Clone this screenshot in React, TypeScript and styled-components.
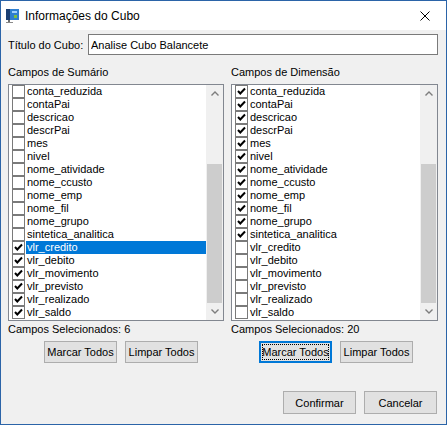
import React from 'react';
import styled, { createGlobalStyle } from 'styled-components';

const GlobalStyle = createGlobalStyle`
  html, body {
    margin: 0;
    padding: 0;
    background: #ffffff;
  }
  * {
    box-sizing: border-box;
  }
`;

type Field = { name: string; checked: boolean };

// rows visible in the list boxes (the lists are scrolled to the bottom)
const FIELDS = [
  'conta_reduzida',
  'contaPai',
  'descricao',
  'descrPai',
  'mes',
  'nivel',
  'nome_atividade',
  'nome_ccusto',
  'nome_emp',
  'nome_fil',
  'nome_grupo',
  'sintetica_analitica',
  'vlr_credito',
  'vlr_debito',
  'vlr_movimento',
  'vlr_previsto',
  'vlr_realizado',
  'vlr_saldo',
];

const summaryFields: Field[] = FIELDS.map((name) => ({
  name,
  checked: name.startsWith('vlr_'),
}));

const dimensionFields: Field[] = FIELDS.map((name) => ({
  name,
  checked: !name.startsWith('vlr_'),
}));

// checked rows above the visible part
const HIDDEN_SUMMARY = 0;
const HIDDEN_DIMENSION = 8;

const WindowIcon: React.FC = () => (
  <svg width="16" height="16" viewBox="0 0 16 16">
    <rect x="1" y="1" width="13" height="11" fill="#2f7fd0" />
    <rect x="1" y="1" width="4" height="11" fill="#1b3f73" />
    <rect x="7" y="3" width="5" height="2" fill="#9ed0ff" />
    <rect x="9" y="7" width="3" height="3" fill="#7bc043" />
    <rect x="3" y="12" width="2" height="2" fill="#6b6b6b" />
    <rect x="1" y="14" width="7" height="1" fill="#8a8a8a" />
  </svg>
);

const CloseIcon: React.FC = () => (
  <svg width="10" height="10" viewBox="0 0 10 10">
    <path d="M0.5 0.5 L9.5 9.5 M9.5 0.5 L0.5 9.5" stroke="#000" strokeWidth="1" />
  </svg>
);

const CheckMark: React.FC = () => (
  <svg width="11" height="11" viewBox="0 0 11 11">
    <path d="M2 5 L4.3 7.5 L9 2.5" fill="none" stroke="#000" strokeWidth="2" />
  </svg>
);

const Chevron: React.FC<{ down?: boolean }> = ({ down }) => (
  <svg width="8" height="5" viewBox="0 0 8 5">
    <path
      d={down ? 'M0.5 0.5 L4 4 L7.5 0.5' : 'M0.5 4.5 L4 1 L7.5 4.5'}
      fill="none"
      stroke="#7d7d7d"
      strokeWidth="1.4"
    />
  </svg>
);

const FieldList: React.FC<{ fields: Field[]; selected?: string }> = ({ fields, selected }) => (
  <ListBox>
    <Items>
      {fields.map((f) => (
        <Row key={f.name}>
          <Box>{f.checked && <CheckMark />}</Box>
          <ItemLabel $selected={f.name === selected}>{f.name}</ItemLabel>
        </Row>
      ))}
    </Items>
    <ScrollBar>
      <ArrowCell>
        <Chevron />
      </ArrowCell>
      <Track>
        <Thumb />
      </Track>
      <ArrowCell>
        <Chevron down />
      </ArrowCell>
    </ScrollBar>
  </ListBox>
);

const App: React.FC = () => {
  const summaryCount = HIDDEN_SUMMARY + summaryFields.filter((f) => f.checked).length;
  const dimensionCount = HIDDEN_DIMENSION + dimensionFields.filter((f) => f.checked).length;

  return (
    <>
      <GlobalStyle />
      <Window>
        <TitleBar>
          <WindowIcon />
          <Title>Informações do Cubo</Title>
          <CloseButton>
            <CloseIcon />
          </CloseButton>
        </TitleBar>
        <Body>
          <NameRow>
            <Label>Título do Cubo:</Label>
            <TextInput readOnly value="Analise Cubo Balancete" />
          </NameRow>
          <Columns>
            <Column>
              <Caption>Campos de Sumário</Caption>
              <FieldList fields={summaryFields} selected="vlr_credito" />
              <Count>Campos Selecionados: {summaryCount}</Count>
              <ButtonRow $indent={36}>
                <Button>Marcar Todos</Button>
                <Button>Limpar Todos</Button>
              </ButtonRow>
            </Column>
            <Column>
              <Caption>Campos de Dimensão</Caption>
              <FieldList fields={dimensionFields} />
              <Count>Campos Selecionados: {dimensionCount}</Count>
              <ButtonRow $indent={28}>
                <Button $focused>Marcar Todos</Button>
                <Button>Limpar Todos</Button>
              </ButtonRow>
            </Column>
          </Columns>
          <Footer>
            <Button $tall>Confirmar</Button>
            <Button $tall>Cancelar</Button>
          </Footer>
        </Body>
      </Window>
    </>
  );
};

const Window = styled.div`
  width: 447px;
  height: 425px;
  border: 1px solid #2b64a8;
  background: #f0f0f0;
  display: flex;
  flex-direction: column;
  font-family: 'Liberation Sans', Arial, sans-serif;
  font-size: 11px;
  color: #000;
`;

const TitleBar = styled.div`
  height: 29px;
  background: #ffffff;
  display: flex;
  align-items: center;
  padding-left: 4px;
`;

const Title = styled.div`
  font-size: 12px;
  margin-left: 4px;
`;

const CloseButton = styled.div`
  margin-left: auto;
  width: 30px;
  display: flex;
  justify-content: center;
  padding-right: 10px;
  margin-right: 1px;
`;

const Body = styled.div`
  flex: 1;
  display: flex;
  flex-direction: column;
  padding: 4px 8px 10px 7px;
`;

const NameRow = styled.div`
  display: flex;
  align-items: center;
  height: 21px;
`;

const Label = styled.div`
  width: 80px;
`;

const TextInput = styled.input`
  flex: 1;
  height: 21px;
  border: 1px solid #7a7a7a;
  background: #fff;
  padding: 0 2px;
  font-family: 'Liberation Sans', Arial, sans-serif;
  font-size: 11px;
  color: #000;
  outline: none;
`;

const Columns = styled.div`
  display: grid;
  grid-template-columns: 216px 207px;
  column-gap: 7px;
  margin-top: 11px;
`;

const Column = styled.div`
  display: flex;
  flex-direction: column;
`;

const Caption = styled.div`
  line-height: 13px;
  height: 13px;
`;

const ListBox = styled.div`
  margin-top: 5px;
  height: 237px;
  border: 1px solid #828790;
  background: #fff;
  display: flex;
`;

const Items = styled.div`
  flex: 1;
  display: flex;
  flex-direction: column;
  min-width: 0;
`;

const Row = styled.div`
  height: 13px;
  display: flex;
  align-items: center;
  padding-left: 3px;
`;

const Box = styled.div`
  width: 13px;
  height: 13px;
  border: 1px solid #7a7a7a;
  background: #fff;
  display: flex;
  align-items: center;
  justify-content: center;
  flex-shrink: 0;
`;

const ItemLabel = styled.div<{ $selected?: boolean }>`
  flex: 1;
  height: 13px;
  line-height: 13px;
  margin-left: 1px;
  padding-left: 1px;
  white-space: nowrap;
  background: ${({ $selected }) => ($selected ? '#0078d7' : 'transparent')};
  color: ${({ $selected }) => ($selected ? '#fff' : '#000')};
`;

const ScrollBar = styled.div`
  width: 17px;
  background: #f0f0f0;
  display: flex;
  flex-direction: column;
`;

const ArrowCell = styled.div`
  height: 17px;
  display: flex;
  align-items: center;
  justify-content: center;
`;

const Track = styled.div`
  flex: 1;
  display: flex;
  flex-direction: column;
  padding: 0 1px;
`;

const Thumb = styled.div`
  margin-top: auto;
  height: 139px;
  background: #cdcdcd;
`;

const Count = styled.div`
  margin-top: 2px;
  line-height: 13px;
`;

const ButtonRow = styled.div<{ $indent: number }>`
  display: flex;
  gap: 8px;
  margin-top: 5px;
  padding-left: ${({ $indent }) => $indent}px;
`;

const Button = styled.button<{ $focused?: boolean; $tall?: boolean }>`
  width: 73px;
  height: ${({ $tall }) => ($tall ? 23 : 22)}px;
  padding: 0;
  background: #e1e1e1;
  border: 1px solid ${({ $focused }) => ($focused ? '#0078d7' : '#adadad')};
  box-shadow: ${({ $focused }) => ($focused ? 'inset 0 0 0 1px #0078d7' : 'none')};
  font-family: 'Liberation Sans', Arial, sans-serif;
  font-size: 11px;
  color: #000;
  outline: ${({ $focused }) => ($focused ? '1px dotted #000' : 'none')};
  outline-offset: -4px;
`;

const Footer = styled.div`
  margin-top: auto;
  display: flex;
  justify-content: flex-end;
  gap: 8px;
  padding-right: 1px;
`;

export default App;
